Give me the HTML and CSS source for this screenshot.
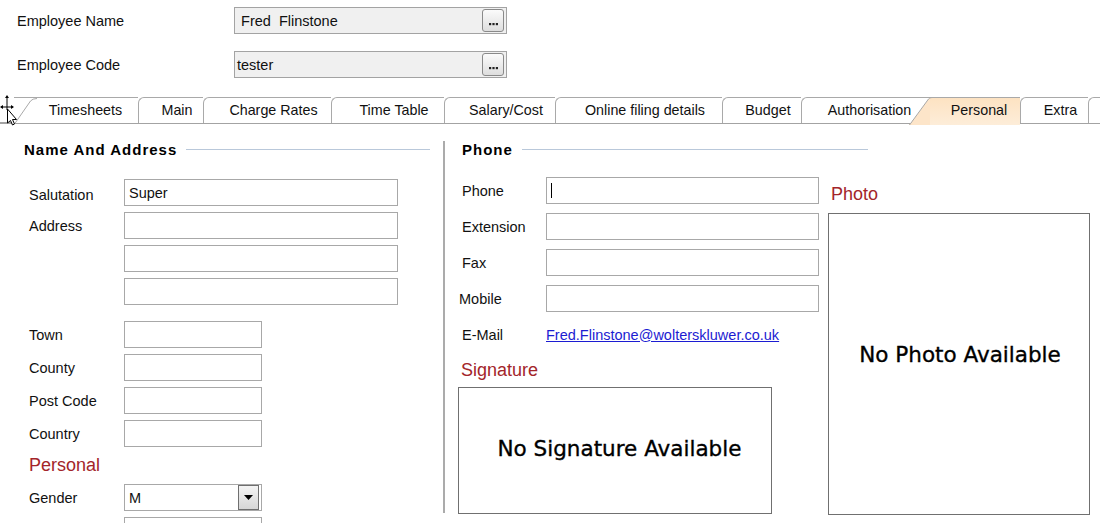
FILE: index.html
```html
<!DOCTYPE html>
<html>
<head>
<meta charset="utf-8">
<link rel="stylesheet" href="styles.css">
</head>
<body>
<div class="header">
  <div class="hrow">
    <span class="hlabel">Employee Name</span>
    <div class="lookup">
      <span class="lookup-text">&nbsp;Fred&nbsp; Flinstone</span>
      <span class="dots"><svg width="9" height="3" viewBox="0 0 9 3"><rect x="0" y="0" width="2.2" height="2.2"/><rect x="3.4" y="0" width="2.2" height="2.2"/><rect x="6.8" y="0" width="2.2" height="2.2"/></svg></span>
    </div>
  </div>
  <div class="hrow">
    <span class="hlabel">Employee Code</span>
    <div class="lookup">
      <span class="lookup-text">tester</span>
      <span class="dots"><svg width="9" height="3" viewBox="0 0 9 3"><rect x="0" y="0" width="2.2" height="2.2"/><rect x="3.4" y="0" width="2.2" height="2.2"/><rect x="6.8" y="0" width="2.2" height="2.2"/></svg></span>
    </div>
  </div>
</div>

<div class="tabs">
  <div class="tab tab-first"><svg class="slant" width="24" height="26" viewBox="0 0 24 26"><polygon points="0,0 23,0 17,2 0,26" fill="#fff"/><path d="M0.5 26 L16.5 3 Q18.5 0.5 23 0.5" fill="none" stroke="#a9a9a9" stroke-width="1"/></svg>Timesheets</div>
  <div class="tab">Main</div>
  <div class="tab">Charge Rates</div>
  <div class="tab">Time Table</div>
  <div class="tab">Salary/Cost</div>
  <div class="tab">Online filing details</div>
  <div class="tab">Budget</div>
  <div class="tab tab-before-active">Authorisation</div>
  <div class="tab tab-active"><svg class="slant" width="24" height="28" viewBox="0 0 24 28"><path d="M0.5 28 L19.5 2 Q20.5 0.5 23 0.5" fill="none" stroke="#a9a9a9" stroke-width="1"/></svg>Personal</div>
  <div class="tab">Extra</div>
  <div class="tab tab-rest"></div>
</div>

<svg class="cursor" width="18" height="32" viewBox="0 0 18 32">
  <path d="M7 4 V16 M1 13 H13" stroke="#000" stroke-width="1" fill="none"/>
  <polygon points="7,1 5,4 9,4" fill="#000"/>
  <polygon points="0,13 3,11 3,15" fill="#000"/>
  <polygon points="14,13 11,11 11,15" fill="#000"/>
  <polygon points="7.5,15 7.5,29 10.5,26.5 12.5,31 14.5,30 12.5,25.5 16.5,25.5" fill="#fff" stroke="#000" stroke-width="1"/>
</svg>

<div class="content">
  <section class="left">
    <div class="sec-head">Name And Address</div>
    <div class="form">
      <div class="frow"><span class="flabel lower">Salutation</span><div class="inp wide">Super</div></div>
      <div class="frow"><span class="flabel">Address</span><div class="inp wide"></div></div>
      <div class="frow"><span class="flabel"></span><div class="inp wide"></div></div>
      <div class="frow"><span class="flabel"></span><div class="inp wide"></div></div>
      <div class="frow gap-before"><span class="flabel">Town</span><div class="inp short"></div></div>
      <div class="frow"><span class="flabel">County</span><div class="inp short"></div></div>
      <div class="frow"><span class="flabel">Post Code</span><div class="inp short"></div></div>
      <div class="frow"><span class="flabel">Country</span><div class="inp short"></div></div>
      <div class="red-title">Personal</div>
      <div class="frow"><span class="flabel">Gender</span><div class="inp short select"><span>M</span><span class="drop"><svg width="9" height="5" viewBox="0 0 9 5"><polygon points="0,0 9,0 4.5,5" fill="#000"/></svg></span></div></div>
      <div class="frow"><span class="flabel"></span><div class="inp short"></div></div>
    </div>
  </section>
  <div class="divider"></div>
  <section class="right">
    <div class="sec-head phone-head">Phone</div>
    <div class="rbody">
      <div class="pfields">
        <div class="prow"><span class="plabel">Phone</span><div class="inp pinp"><span class="caret"></span></div></div>
        <div class="prow"><span class="plabel">Extension</span><div class="inp pinp"></div></div>
        <div class="prow"><span class="plabel">Fax</span><div class="inp pinp"></div></div>
        <div class="prow"><span class="plabel mobile">Mobile</span><div class="inp pinp"></div></div>
        <div class="prow"><span class="plabel">E-Mail</span><a class="email" href="#">Fred.Flinstone@wolterskluwer.co.uk</a></div>
        <div class="red-title sig-title">Signature</div>
        <div class="imgbox sigbox">No Signature Available</div>
      </div>
      <div class="photo-col">
        <div class="red-title photo-title">Photo</div>
        <div class="imgbox photobox">No Photo Available</div>
      </div>
    </div>
  </section>
</div>
</body>
</html>
```

FILE: styles.css
```css
* { box-sizing: border-box; }
html, body { margin: 0; padding: 0; }
body {
  width: 1100px;
  height: 523px;
  overflow: hidden;
  background: #fff;
  font-family: "Liberation Sans", Arial, sans-serif;
  font-size: 14.5px;
  color: #111;
  position: relative;
}

/* header */
.header {
  padding: 7px 0 0 17px;
  display: flex;
  flex-direction: column;
  gap: 17px;
}
.hrow { display: flex; align-items: center; height: 27px; }
.hlabel { width: 217px; }
.lookup {
  width: 273px;
  height: 27px;
  border: 1px solid #a3a3a3;
  background: #f0f0f0;
  display: flex;
  align-items: center;
  justify-content: space-between;
  padding: 0 2px 0 2px;
}
.dots {
  width: 22px;
  height: 23px;
  border: 1px solid #8a8a8a;
  border-radius: 3px;
  background: linear-gradient(#fbfbfb, #dedede);
  display: flex;
  align-items: flex-end;
  justify-content: center;
  padding-bottom: 5px;
}
.dots svg { display: block; fill: #222; }

/* tabs */
.tabs {
  margin-top: 19px;
  height: 27px;
  display: grid;
  grid-template-columns: 124px 65px 128px 113px 111px 167px 79px 128px 91px 68px 1fr;
  padding-left: 14px;
  border-bottom: 2px solid #a3a3a3;
}
.tab {
  position: relative;
  border-top: 1px solid #a9a9a9;
  border-left: 1px solid #a9a9a9;
  border-top-left-radius: 6px;
  padding-left: 12px;
  text-align: center;
  line-height: 25px;
  font-size: 14.3px;
  white-space: nowrap;
  background: #fff;
}
.tab-first { border-left: none; border-top-left-radius: 0; padding-left: 19px; }
.tab-before-active { padding-left: 8px; }
.tab-active {
  margin-left: -20px;
  margin-bottom: -2px;
  border-left: none;
  border-top: none;
  border-top-left-radius: 0;
  padding-left: 29px;
  padding-top: 1px;
  background:
    linear-gradient(to bottom right, transparent 50%, #fde5c9 50%) no-repeat 0 0 / 21px 100%,
    linear-gradient(#a9a9a9, #a9a9a9) no-repeat 20px 0 / calc(100% - 20px) 1px,
    linear-gradient(#fde2c1, #fdedd9) no-repeat 21px 0 / calc(100% - 21px) 100%;
}
.slant { position: absolute; left: 0; top: 0; display: block; }

.cursor { position: absolute; left: 0; top: 94px; }

/* content */
.content { display: flex; }
.left { width: 443px; padding: 16px 13px 0 24px; }
.sec-head {
  display: flex;
  align-items: center;
  height: 18px;
  font-weight: bold;
  font-size: 15px;
  letter-spacing: 1px;
  color: #000;
}
.sec-head::after {
  content: "";
  flex: 1;
  height: 1px;
  background: #b9c8da;
  margin-left: 9px;
}

.form {
  margin-top: 21px;
  padding-left: 5px;
  display: flex;
  flex-direction: column;
  gap: 6px;
}
.frow { display: flex; align-items: center; height: 27px; }
.flabel { width: 95px; }
.flabel.lower { padding-top: 4px; }
.gap-before { margin-top: 10px; }
.inp {
  height: 27px;
  border: 1px solid #a8a8a8;
  background: #fff;
  padding-left: 4px;
  display: flex;
  align-items: center;
}
.wide { width: 274px; }
.short { width: 138px; }
.select { justify-content: space-between; padding-right: 2px; }
.drop {
  width: 21px;
  height: 25px;
  border: 1px solid #6f6f6f;
  background: linear-gradient(#f4f4f4, #d6d6d6);
  display: flex;
  align-items: center;
  justify-content: center;
}
.drop svg { display: block; }

.red-title {
  color: #a3252a;
  font-size: 18px;
  height: 25px;
  line-height: 25px;
}

.divider {
  width: 2px;
  height: 372px;
  margin-top: 17px;
  background: #ababab;
}

.right { padding: 16px 0 0 13px; }
.phone-head { width: 410px; padding-left: 4px; }
.rbody { display: flex; margin-top: 19px; }
.pfields { width: 361px; display: flex; flex-direction: column; }
.prow { display: flex; align-items: center; height: 27px; margin-bottom: 9px; }
.plabel { width: 88px; padding-left: 4px; }
.plabel.mobile { padding-left: 1px; }
.pinp { width: 273px; }
.caret { width: 1px; height: 15px; background: #000; }
.email { color: #1c1cd2; text-decoration: underline; }

.sig-title { margin-top: 2px; height: 22px; line-height: 22px; padding-left: 3px; }
.imgbox {
  border: 1px solid #707070;
  display: flex;
  align-items: center;
  justify-content: center;
  font-family: "DejaVu Sans", Verdana, sans-serif;
  font-size: 21.5px;
  line-height: 25px;
  color: #000;
  -webkit-text-stroke: 0.35px #000;
}
.sigbox { width: 314px; height: 127px; margin-top: 6px; padding: 0 0 5px 9px; }

.photo-col { margin-left: 9px; width: 262px; }
.photo-title { margin-top: 6px; height: 22px; line-height: 22px; padding-left: 3px; }
.photobox { height: 302px; margin-top: 8px; padding: 0 0 19px 2px; }
```
